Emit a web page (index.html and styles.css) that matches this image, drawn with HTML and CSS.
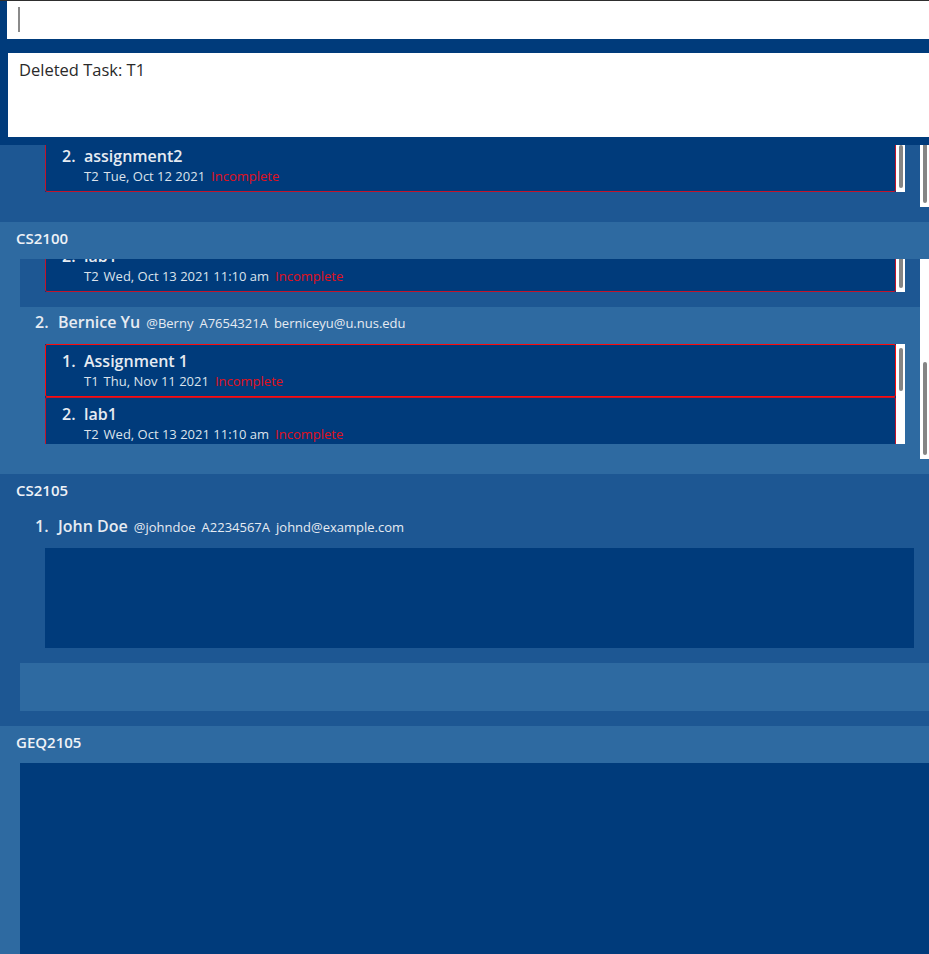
FILE: index.html
```html
<!DOCTYPE html>
<html>
<head>
<meta charset="utf-8">
<link rel="stylesheet" href="styles.css">
</head>
<body>
<div class="app">
  <div class="command"><span class="caret"></span></div>
  <div class="result">Deleted Task: T1</div>

  <div class="modules">
    <!-- partially scrolled module -->
    <div class="module medium clip">
      <div class="students">
        <div class="students-view bottom">
          <div class="student medium">
            <div class="tasks">
              <div class="tasks-view bottom">
                <div class="card">
                  <div class="card-title"><span class="idx">2.</span><span>assignment2</span></div>
                  <div class="card-sub"><span>T2</span><span>Tue, Oct 12 2021</span><span class="status">Incomplete</span></div>
                </div>
              </div>
              <div class="vbar"><div class="thumb" style="top:53px;height:43px"></div></div>
            </div>
          </div>
        </div>
        <div class="vbar outer"><div class="thumb" style="top:103px;height:93px"></div></div>
      </div>
    </div>

    <div class="module light">
      <div class="mod-head">CS2100</div>
      <div class="students">
        <div class="students-view bottom">
          <div class="student medium">
            <div class="tasks">
              <div class="tasks-view bottom">
                <div class="card">
                  <div class="card-title"><span class="idx">2.</span><span>lab1</span></div>
                  <div class="card-sub"><span>T2</span><span>Wed, Oct 13 2021 11:10 am</span><span class="status">Incomplete</span></div>
                </div>
              </div>
              <div class="vbar"><div class="thumb" style="top:53px;height:43px"></div></div>
            </div>
          </div>
          <div class="student light">
            <div class="srow"><span class="sidx">2.</span><span class="sname">Bernice Yu</span><span class="sdet">@Berny</span><span class="sdet">A7654321A</span><span class="sdet">berniceyu@u.nus.edu</span></div>
            <div class="tasks">
              <div class="tasks-view">
                <div class="card selected">
                  <div class="card-title"><span class="idx">1.</span><span>Assignment 1</span></div>
                  <div class="card-sub"><span>T1</span><span>Thu, Nov 11 2021</span><span class="status">Incomplete</span></div>
                </div>
                <div class="card">
                  <div class="card-title"><span class="idx">2.</span><span>lab1</span></div>
                  <div class="card-sub"><span>T2</span><span>Wed, Oct 13 2021 11:10 am</span><span class="status">Incomplete</span></div>
                </div>
              </div>
              <div class="vbar"><div class="thumb" style="top:4px;height:43px"></div></div>
            </div>
          </div>
        </div>
        <div class="vbar outer"><div class="thumb" style="top:103px;height:93px"></div></div>
      </div>
    </div>

    <div class="module medium">
      <div class="mod-head">CS2105</div>
      <div class="students">
        <div class="students-view">
          <div class="student medium">
            <div class="srow"><span class="sidx">1.</span><span class="sname">John Doe</span><span class="sdet">@johndoe</span><span class="sdet">A2234567A</span><span class="sdet">johnd@example.com</span></div>
            <div class="tasks">
              <div class="tasks-view"></div>
            </div>
          </div>
          <div class="filler light"></div>
        </div>
      </div>
    </div>

    <div class="module light">
      <div class="mod-head">GEQ2105</div>
      <div class="students">
        <div class="students-view empty"></div>
      </div>
    </div>
  </div>
</div>
</body>
</html>
```
FILE: styles.css
```css
* { box-sizing: border-box; }
html, body { margin: 0; padding: 0; }
body {
  background: #003b7b;
  font-family: "Open Sans", "Noto Sans", sans-serif;
  width: 929px;
  height: 954px;
  overflow: hidden;
}
.app {
  display: flex;
  flex-direction: column;
  height: 954px;
  border-top: 1px solid #2e2e2e;
}
.command {
  margin-left: 7px;
  height: 38px;
  flex-shrink: 0;
  background: #fff;
  padding: 6px 0 0 11px;
}
.caret {
  display: block;
  width: 2px;
  height: 25px;
  background: #8a8a8a;
}
.result {
  flex-shrink: 0;
  margin: 14px 0 8px 8px;
  height: 84px;
  background: #fff;
  color: #2a2a2a;
  font-size: 16.5px;
  line-height: 22px;
  padding: 6px 0 0 11px;
}
.modules {
  flex: 1;
  min-height: 0;
  overflow: hidden;
  display: flex;
  flex-direction: column;
}
.module {
  flex-shrink: 0;
  display: flex;
  flex-direction: column;
  padding-bottom: 15px;
}
.module.clip {
  height: 77px;
  overflow: hidden;
  justify-content: flex-end;
}
.medium { background: #1d5793; }
.light { background: #2e6aa1; }
.mod-head {
  flex-shrink: 0;
  height: 37px;
  padding: 0 0 5px 16px;
  display: flex;
  align-items: center;
  font-size: 15px;
  font-weight: 600;
  color: #eef2f7;
}
.students {
  flex-shrink: 0;
  height: 200px;
  margin-left: 20px;
  display: flex;
}
.students-view {
  flex: 1;
  min-width: 0;
  overflow: hidden;
  display: flex;
  flex-direction: column;
}
.students-view.empty { background: #003b7b; height: 400px; }
.bottom { justify-content: flex-end; }
.student {
  flex-shrink: 0;
  padding: 0 15px 15px 0;
}
.filler { flex-shrink: 0; height: 48px; }
.srow {
  height: 37px;
  padding: 4px 0 0 15px;
  display: flex;
  align-items: baseline;
  color: #e6ebf2;
  white-space: nowrap;
}
.sidx { width: 23px; font-size: 16px; font-weight: 600; }
.sname { font-size: 16px; font-weight: 600; margin-right: 6px; }
.sdet { font-size: 13px; margin-right: 6px; }
.tasks {
  flex-shrink: 0;
  height: 100px;
  margin-left: 25px;
  background: #003b7b;
  display: flex;
}
.tasks-view {
  flex: 1;
  min-width: 0;
  overflow: hidden;
  display: flex;
  flex-direction: column;
}
.vbar {
  flex-shrink: 0;
  width: 9px;
  background: #fff;
  position: relative;
}
.thumb {
  position: absolute;
  left: 3px;
  width: 4px;
  border-radius: 2px;
  background: #858585;
}
.card {
  flex-shrink: 0;
  height: 53px;
  border: 1px solid #c2142b;
  border-radius: 2px;
  padding: 6px 0 0 16px;
  color: #e6ebf2;
  white-space: nowrap;
}
.card.selected { border-color: #ff0a0a; }
.card-title {
  display: flex;
  height: 21px;
  line-height: 21px;
  font-size: 16px;
  font-weight: 600;
}
.idx { width: 22px; }
.card-sub {
  display: flex;
  padding-left: 22px;
  height: 18px;
  line-height: 18px;
  font-size: 13px;
  color: #dce3ec;
}
.card-sub span { margin-right: 6px; }
.card-sub span:first-child { margin-right: 5px; }
.card-sub .status { color: #e0101c; }
```
